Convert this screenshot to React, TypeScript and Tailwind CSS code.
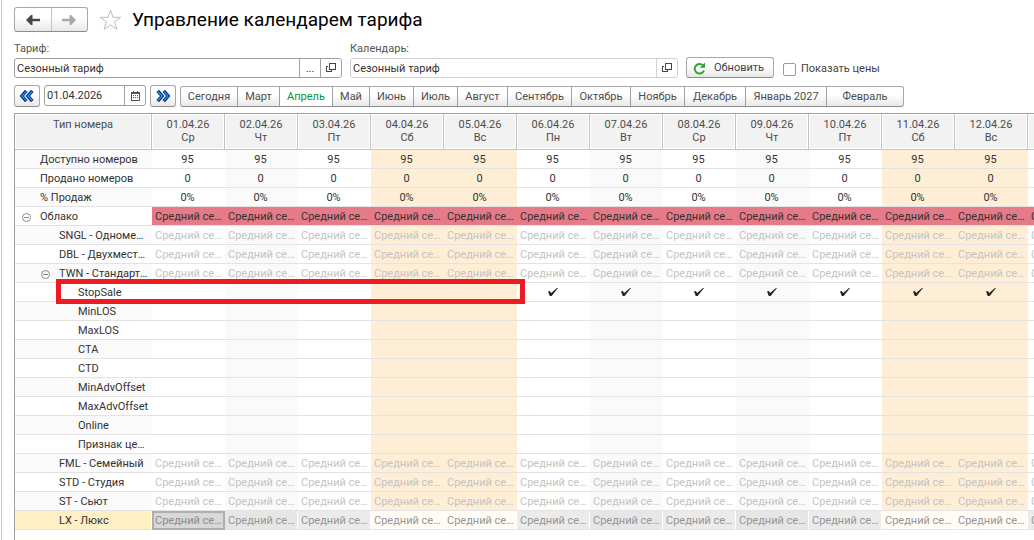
import type { ReactNode } from "react";
import clsx from "clsx";

const shadedDates = [2, 7, 9];

const days = ["Ср", "Чт", "Пт", "Сб", "Вс", "Пн", "Вт", "Ср", "Чт", "Пт", "Сб", "Вс", "Пн"].map((weekday, i) => ({
  date: `${String(i + 1).padStart(2, "0")}.04.26`,
  weekday,
  weekend: weekday === "Сб" || weekday === "Вс",
  shaded: shadedDates.includes(i + 1),
}));

type Row = { name: string; level: 0 | 1 | 2; kind: "stat" | "group" | "price" | "stop" | "empty" | "current"; value?: string; open?: boolean };

const rows: Row[] = [
  { name: "Доступно номеров", level: 0, kind: "stat", value: "95" },
  { name: "Продано номеров", level: 0, kind: "stat", value: "0" },
  { name: "% Продаж", level: 0, kind: "stat", value: "0%" },
  { name: "Облако", level: 0, kind: "group", open: true },
  { name: "SNGL - Одноме…", level: 1, kind: "price" },
  { name: "DBL - Двухмест…", level: 1, kind: "price" },
  { name: "TWN - Стандарт…", level: 1, kind: "price", open: true },
  { name: "StopSale", level: 2, kind: "stop" },
  { name: "MinLOS", level: 2, kind: "empty" },
  { name: "MaxLOS", level: 2, kind: "empty" },
  { name: "CTA", level: 2, kind: "empty" },
  { name: "CTD", level: 2, kind: "empty" },
  { name: "MinAdvOffset", level: 2, kind: "empty" },
  { name: "MaxAdvOffset", level: 2, kind: "empty" },
  { name: "Online", level: 2, kind: "empty" },
  { name: "Признак це…", level: 2, kind: "empty" },
  { name: "FML - Семейный", level: 1, kind: "price" },
  { name: "STD - Студия", level: 1, kind: "price" },
  { name: "ST - Сьют", level: 1, kind: "price" },
  { name: "LX - Люкс", level: 1, kind: "current" },
];

const months = [
  ["Сегодня", "w-[57px]"],
  ["Март", "w-[42px]"],
  ["Апрель", "w-[53px]"],
  ["Май", "w-[37px]"],
  ["Июнь", "w-[44px]"],
  ["Июль", "w-[44px]"],
  ["Август", "w-[50px]"],
  ["Сентябрь", "w-[64px]"],
  ["Октябрь", "w-[59px]"],
  ["Ноябрь", "w-[54px]"],
  ["Декабрь", "w-[61px]"],
  ["Январь 2027", "w-[81px]"],
  ["Февраль", "w-[76px]"],
];

const raised = "border border-[#a8a8a8] border-b-[#8c8c8c] bg-linear-to-b from-white from-40% to-[#e8e8e8]";

function OpenIcon() {
  return (
    <svg width="10" height="10" viewBox="0 0 10 10" fill="none" stroke="#444" shapeRendering="crispEdges" aria-hidden="true">
      <path d="M3.5 .5h6v6h-6zM2 3.5H.5v5h5V7" />
    </svg>
  );
}

function CalendarIcon() {
  return (
    <svg width="9" height="10" viewBox="0 0 9 10" shapeRendering="crispEdges" aria-hidden="true">
      <path d="M.5 1.5h8v8h-8z" fill="none" stroke="#555" />
      <path d="M0 1h9v2H0zM2 0h1v1H2zM6 0h1v1H6zM2 4h1v1H2zM4 4h1v1H4zM6 4h1v1H6zM2 6h1v1H2zM4 6h1v1H4zM6 6h1v1H6z" fill="#555" />
    </svg>
  );
}

function DoubleChevron({ flip = false }: { flip?: boolean }) {
  return (
    <svg width="14" height="12" viewBox="0 0 14 12" className={clsx(flip && "rotate-180")} aria-hidden="true">
      <path d="M6.3 .9 1.9 6l4.4 5.1M12.3 .9 7.9 6l4.4 5.1" fill="none" stroke="#08256e" strokeWidth="3.4" />
      <path d="M6.1 1.4 1.9 6l4.2 4.6M12.1 1.4 7.9 6l4.2 4.6" fill="none" stroke="#1e90f0" strokeWidth="1.5" />
    </svg>
  );
}

function Arrow({ right = false }: { right?: boolean }) {
  return (
    <svg width="14" height="10" viewBox="0 0 14 10" className={clsx(right ? "rotate-180 text-[#a9a9a9]" : "text-[#484848]")} aria-hidden="true">
      <path d="M0 5 5 0h1.5v3.8H14v2.4H6.5V10H5z" fill="currentColor" />
    </svg>
  );
}

function Check() {
  return (
    <svg width="10" height="8" viewBox="0 0 10 8" className="mx-auto" role="img" aria-label="Да">
      <path d="M0 3.6 1.8 3 3.2 5 9 0h1L3.6 8H1.8z" fill="#222" />
    </svg>
  );
}

function Collapse() {
  return (
    <button aria-label="Свернуть" className="mr-[9px] flex">
      <svg width="9" height="9" viewBox="0 0 9 9" fill="none" stroke="#8a8a8a" aria-hidden="true">
        <circle cx="4.5" cy="4.5" r="4" />
        <path d="M2 4.5h5" />
      </svg>
    </button>
  );
}

function ToolButton({ label, className, children }: { label: string; className?: string; children: ReactNode }) {
  return (
    <button aria-label={label} className={clsx("flex items-center justify-center", className)}>
      {children}
    </button>
  );
}

function cellContent(row: Row) {
  if (row.kind === "stat") return row.value;
  if (row.kind === "stop" || row.kind === "empty") return null;
  return "Средний се…";
}

function cellClass(row: Row, day: (typeof days)[number], index: number) {
  if (row.kind === "group") return "bg-[#e57b88] pl-[3px] text-[#333]";
  if (row.kind === "current") {
    if (index === 0) return "bg-[#d8d8d8] pl-[3px] text-[#8c8c8c] outline-2 -outline-offset-2 outline-[#afafaf]";
    return clsx("border-r border-r-white pl-[3px] text-[#969696]", day.weekend ? "bg-[#fffcf5]" : day.shaded ? "bg-[#e6e6e6]" : "bg-[#ebebeb]");
  }
  return clsx(
    day.weekend ? "bg-[#ffeed6]" : day.shaded ? "bg-[#fafafa]" : "bg-white",
    row.kind === "price" ? "pl-[3px] text-[#c4c4c4]" : "pr-[2px] text-center",
  );
}

function RateGrid() {
  return (
    <div className="relative ml-[12px] mt-[6px] flex-1 overflow-hidden border-l border-t border-[#a0a0a0]">
      <table className="w-[1086px] table-fixed border-separate border-spacing-0">
        <colgroup>
          <col className="w-[137px]" />
          {days.map((d) => (
            <col key={d.date} className="w-[73px]" />
          ))}
        </colgroup>
        <thead>
          <tr className="h-[36px] text-[#4d4d4d]">
            <th className="border-b border-r border-[#c4c4c4] bg-[#f2f2f2] px-0 pt-[4px] align-top font-normal leading-[13px] shadow-[inset_0_0_0_1px_#fff]">Тип номера</th>
            {days.map((d) => (
              <th key={d.date} className="border-b border-r border-[#c4c4c4] bg-[#f2f2f2] px-0 pt-[4px] align-top font-normal leading-[13px] shadow-[inset_0_0_0_1px_#fff]">
                {d.date}
                <br />
                {d.weekday}
              </th>
            ))}
          </tr>
        </thead>
        <tbody>
          {rows.map((row, r) => (
            <tr key={row.name} className="h-[19px] leading-[16px]">
              <th
                scope="row"
                className={clsx(
                  "border-b border-[#e3e3e3] p-0 font-normal text-[#333]",
                  row.kind === "current" ? "border-r border-r-white bg-[#fef0c2]" : r % 2 === 0 ? "bg-[#fafafa]" : "bg-white",
                )}
              >
                <div
                  className={clsx(
                    "flex h-[18px] items-center whitespace-nowrap pt-[2px]",
                    row.open ? (row.level === 0 ? "pl-[7px]" : "pl-[26px]") : row.level === 0 ? "pl-[25px]" : row.level === 1 ? "pl-[44px]" : "pl-[63px]",
                  )}
                >
                  {row.open && <Collapse />}
                  {row.name}
                </div>
              </th>
              {days.map((d, i) => (
                <td
                  key={d.date}
                  className={clsx("whitespace-nowrap border-b border-b-[#e3e3e3] py-0", row.kind !== "stop" && "pt-[2px]", cellClass(row, d, i))}
                >
                  {row.kind === "stop" && i >= 5 ? <Check /> : cellContent(row)}
                </td>
              ))}
            </tr>
          ))}
        </tbody>
      </table>
      <div className="pointer-events-none absolute left-[41px] top-[165px] h-[25px] w-[469px] border-5 border-[#ed1c24]" />
    </div>
  );
}

export default function App() {
  return (
    <div className="flex min-h-screen flex-col overflow-hidden bg-white pl-px font-['Roboto','Liberation_Sans',sans-serif] text-[11px] text-[#333]">
      <div className="flex flex-1 flex-col border-l border-[#b4d8b4]">
        <header className="flex items-center pl-[12px] pt-[7px]">
          <div className={clsx("flex h-[25px] w-[74px] rounded-[3px]", raised)}>
            <ToolButton label="Назад" className="flex-1 border-r border-[#c4c4c4]">
              <Arrow />
            </ToolButton>
            <ToolButton label="Вперед" className="flex-1">
              <Arrow right />
            </ToolButton>
          </div>
          <ToolButton label="Добавить в избранное" className="ml-[11px]">
            <svg width="23" height="22" viewBox="0 0 23 22" fill="white" stroke="#b4bcc4" aria-hidden="true">
              <path d="M11.5 1.2 14 8.3h7.8l-6.2 4.6 2.3 7.4-6.4-4.5-6.4 4.5 2.3-7.4-6.2-4.6H9z" />
            </svg>
          </ToolButton>
          <h1 className="ml-[10px] text-[19px] leading-[24px] text-black">Управление календарем тарифа</h1>
        </header>

        <div className="flex items-end pl-[12px] pt-[8px]">
          <div className="w-[328px]">
            <label htmlFor="rate" className="block h-[18px] leading-[18px] text-[#555]">Тариф:</label>
            <div className="flex h-[20px] rounded-[3px] border border-[#a0a0a0]">
              <input id="rate" defaultValue="Сезонный тариф" className="min-w-0 flex-1 pl-[2px] pt-[2px] outline-none" />
              <ToolButton label="Выбрать" className="w-[21px] border-l border-[#a0a0a0] leading-none">...</ToolButton>
              <ToolButton label="Открыть тариф" className="w-[21px] border-l border-[#a0a0a0]">
                <OpenIcon />
              </ToolButton>
            </div>
          </div>
          <div className="ml-[8px] w-[328px]">
            <label htmlFor="calendar" className="block h-[18px] leading-[18px] text-[#555]">Календарь:</label>
            <div className="flex h-[20px] rounded-[3px] border border-[#d0d0d0]">
              <input id="calendar" readOnly defaultValue="Сезонный тариф" className="min-w-0 flex-1 pl-[2px] pt-[2px] outline-none" />
              <ToolButton label="Открыть календарь" className="w-[21px] border-l border-[#d0d0d0]">
                <OpenIcon />
              </ToolButton>
            </div>
          </div>
          <button className={clsx("ml-[8px] flex h-[21px] w-[88px] items-center gap-[8px] rounded-[3px] pl-[6px] pt-[2px] text-[#444]", raised)}>
            <svg width="13" height="13" viewBox="0 0 13 13" aria-hidden="true">
              <path d="M10 3.4A4.8 4.8 0 1 0 11 8.5" fill="none" stroke="#2fa336" strokeWidth="2" />
              <path d="M12 .5v5.2H6.8z" fill="#2fa336" />
            </svg>
            Обновить
          </button>
          <label className="ml-[9px] flex h-[20px] items-center gap-[5px] pt-[2px] text-[#444]">
            <input type="checkbox" className="size-[13px] appearance-none rounded-[2px] border border-[#999] bg-white checked:bg-[#2fa336]" />
            Показать цены
          </label>
        </div>

        <div className="flex pl-[12px] pt-[7px]">
          <ToolButton label="Предыдущий период" className={clsx("h-[22px] w-[26px] rounded-[3px]", raised)}>
            <DoubleChevron />
          </ToolButton>
          <div className="ml-[4px] flex h-[21px] w-[102px] rounded-[3px] border border-[#a0a0a0]">
            <input aria-label="Дата" defaultValue="01.04.2026" className="min-w-0 flex-1 pl-[2px] pt-[2px] outline-none" />
            <ToolButton label="Открыть выбор даты" className="w-[21px] border-l border-[#a0a0a0]">
              <CalendarIcon />
            </ToolButton>
          </div>
          <ToolButton label="Следующий период" className={clsx("ml-[4px] h-[22px] w-[26px] rounded-[3px]", raised)}>
            <DoubleChevron flip />
          </ToolButton>
          <div className={clsx("ml-[4px] mt-px flex h-[21px] overflow-hidden rounded-[3px] text-[#4d4d4d]", raised)}>
            {months.map(([name, width]) => (
              <button
                key={name}
                className={clsx("shrink-0 whitespace-nowrap border-r border-[#a0a0a0] pt-[2px] text-center last:border-r-0", width, name === "Апрель" && "bg-white text-[#009646]")}
              >
                {name}
              </button>
            ))}
          </div>
        </div>

        <RateGrid />
      </div>
    </div>
  );
}
